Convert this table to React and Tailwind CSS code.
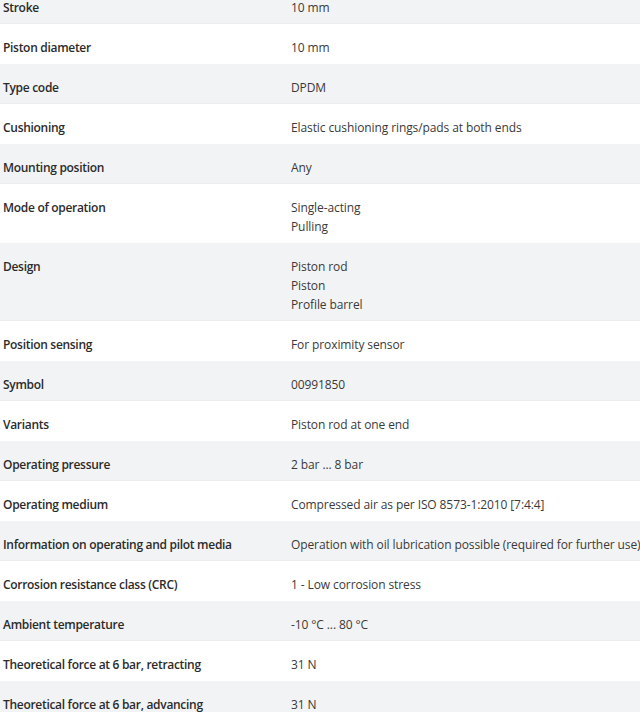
import React from "react";

const rows = [
  ["Stroke", ["10 mm"]],
  ["Piston diameter", ["10 mm"]],
  ["Type code", ["DPDM"]],
  ["Cushioning", ["Elastic cushioning rings/pads at both ends"]],
  ["Mounting position", ["Any"]],
  ["Mode of operation", ["Single-acting", "Pulling"]],
  ["Design", ["Piston rod", "Piston", "Profile barrel"]],
  ["Position sensing", ["For proximity sensor"]],
  ["Symbol", ["00991850"]],
  ["Variants", ["Piston rod at one end"]],
  ["Operating pressure", ["2 bar ... 8 bar"]],
  ["Operating medium", ["Compressed air as per ISO 8573-1:2010 [7:4:4]"]],
  ["Information on operating and pilot media", ["Operation with oil lubrication possible (required for further use)"]],
  ["Corrosion resistance class (CRC)", ["1 - Low corrosion stress"]],
  ["Ambient temperature", ["-10 °C ... 80 °C"]],
  ["Theoretical force at 6 bar, retracting", ["31 N"]],
  ["Theoretical force at 6 bar, advancing", ["31 N"]],
];

export default function App() {
  return (
    <div
      className="w-[640px] h-[712px] overflow-hidden bg-white text-[12px] leading-[19px] text-[#333]"
      style={{ fontFamily: '"Open Sans", "Noto Sans", sans-serif' }}
    >
      <div className="-mt-4">
        {rows.map(([label, values], i) => (
          <div
            key={label}
            className={
              "flex pt-[14px] pb-[6px] border-b " +
              (i % 2 === 0 ? "bg-[#f2f3f4] border-[#ebeced]" : "bg-white border-white")
            }
          >
            <div className="w-[291px] shrink-0 pl-[3px] font-semibold tracking-[-0.3px] text-[#2b2b2b] whitespace-nowrap">
              {label}
            </div>
            <div className="flex-1 whitespace-nowrap overflow-hidden tracking-[-0.1px] text-[#3a3a3a]">
              {values.map((v) => (
                <div key={v}>{v}</div>
              ))}
            </div>
          </div>
        ))}
      </div>
    </div>
  );
}
